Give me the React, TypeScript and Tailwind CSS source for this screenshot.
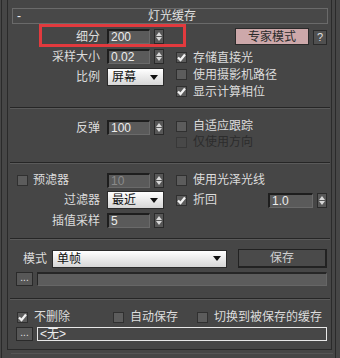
import React from "react";

const FONT = "font-['Liberation_Sans','Noto_Sans_CJK_SC',sans-serif]";

function Spin() {
  return (
    <div className="w-[10px] h-[15px] bg-[#575757] border border-[#2a2a2a] flex flex-col items-center justify-between py-[2px]">
      <svg width="6" height="4" viewBox="0 0 6 4"><path d="M3 0 L6 4 L0 4 Z" fill="#d8d8d8" /></svg>
      <svg width="6" height="4" viewBox="0 0 6 4"><path d="M0 0 L6 0 L3 4 Z" fill="#d8d8d8" /></svg>
    </div>
  );
}

function NumInput({ value, dim = false, w = "w-[43px]" }: { value: string; dim?: boolean; w?: string }) {
  return (
    <div
      className={`${w} h-[15px] bg-[#5a5a5a] border-t-2 border-l-2 border-b border-r border-t-[#1e1e1e] border-l-[#1e1e1e] border-b-[#6a6a6a] border-r-[#6a6a6a] flex items-center pl-[2px] text-[12px] leading-none whitespace-nowrap ${dim ? "text-[#8a8a8a]" : "text-[#ececec]"}`}
    >
      {value}
    </div>
  );
}

function Dropdown({ value, w }: { value: string; w: string }) {
  return (
    <div className={`${w} h-[18px] bg-gradient-to-b from-[#ffffff] to-[#d6d6d6] border border-[#2a2a2a] flex items-center justify-between pl-[4px] pr-[5px] text-[12px] leading-none text-[#111] whitespace-nowrap`}>
      <span>{value}</span>
      <svg width="8" height="5" viewBox="0 0 8 5"><path d="M0 0 L8 0 L4 5 Z" fill="#111" /></svg>
    </div>
  );
}

function Check({ checked = false, disabled = false }: { checked?: boolean; disabled?: boolean }) {
  return (
    <div
      className={`w-[11px] h-[11px] border ${disabled ? "border-[#383838] bg-[#484848]" : "border-[#303030] bg-[#5c5c5c]"} flex items-center justify-center shrink-0`}
    >
      {checked && (
        <svg width="9" height="9" viewBox="0 0 9 9">
          <path d="M1 4.5 L3.5 7 L8 1.5" stroke="#f2f2f2" strokeWidth="2.2" fill="none" />
        </svg>
      )}
    </div>
  );
}

function CheckRow({ label, checked = false, disabled = false, h = "h-[17px]" }: { label: string; checked?: boolean; disabled?: boolean; h?: string }) {
  return (
    <div className={`${h} flex items-center shrink-0`}>
      <Check checked={checked} disabled={disabled} />
      <span className={`ml-[6px] text-[12px] leading-none whitespace-nowrap ${disabled ? "text-[#2c2c2c]" : "text-[#dcdcdc]"}`}>{label}</span>
    </div>
  );
}

function LeftField({ label, children }: { label: string; children: React.ReactNode }) {
  return (
    <div className="flex items-center w-[156px] shrink-0">
      <div className="w-[92px] text-right text-[12px] leading-none text-[#dcdcdc] whitespace-nowrap">{label}</div>
      <div className="ml-[7px] flex items-center">{children}</div>
    </div>
  );
}

function Sep() {
  return <div className="ml-[2px] w-[320px] h-[2px] border-t border-b border-t-[#262626] border-b-[#5a5a5a]" />;
}

function SmallBtn() {
  return (
    <div className="w-[17px] h-[14px] bg-[#575757] border border-[#2a2a2a] flex items-end justify-center pb-[2px] text-[10px] leading-none text-[#e0e0e0]">
      ...
    </div>
  );
}

export default function App() {
  return (
    <div className={`w-[340px] h-[358px] bg-[#464646] overflow-hidden ${FONT}`}>
      <div className="ml-[1px] w-[335px] h-[358px] border-l border-r border-[#2a2a2a] pl-[5px] flex flex-col">
        <div className="relative w-[325px] h-[350px] border-l border-r border-b border-[#2a2a2a] flex flex-col">
          {/* header */}
          <div className="mt-[8px] ml-[4px] w-[316px] h-[16px] border border-[#6a6a6a] bg-[#484848] flex items-center">
            <span className="pl-[4px] w-[12px] text-[12px] leading-none text-[#f0f0f0]">-</span>
            <span className="flex-1 text-center pr-[8px] text-[12px] leading-none text-[#e0e0e0]">灯光缓存</span>
          </div>

          {/* section 1 */}
          <div className="h-[83px] flex">
            <div className="w-[156px] flex flex-col pt-[5px]">
              <div className="h-[15px] flex">
                <LeftField label="细分">
                  <NumInput value="200" />
                  <div className="ml-[4px]"><Spin /></div>
                </LeftField>
              </div>
              <div className="mt-[5px] h-[15px] flex">
                <LeftField label="采样大小">
                  <NumInput value="0.02" />
                  <div className="ml-[4px]"><Spin /></div>
                </LeftField>
              </div>
              <div className="mt-[4px] h-[18px] flex">
                <LeftField label="比例">
                  <Dropdown value="屏幕" w="w-[57px]" />
                </LeftField>
              </div>
            </div>
            <div className="ml-[12px] flex flex-col pt-[4px]">
              <div className="h-[17px] flex items-start">
                <div className="ml-[59px] w-[74px] h-[17px] bg-[#cda8aa] border border-[#2a2a2a] flex items-center justify-center text-[12px] leading-none text-[#2a2a2a]">
                  专家模式
                </div>
                <div className="ml-[4px] mt-[2px] w-[14px] h-[15px] bg-[#505050] border border-[#2a2a2a] flex items-center justify-center text-[11px] leading-none text-[#e0e0e0]">
                  ?
                </div>
              </div>
              <div className="mt-[4px]">
                <CheckRow label="存储直接光" checked />
                <CheckRow label="使用摄影机路径" />
                <CheckRow label="显示计算相位" checked />
              </div>
            </div>
          </div>
          <Sep />

          {/* section 2 */}
          <div className="h-[53px] flex pt-[9px]">
            <div className="h-[15px] mt-[2px] flex">
              <LeftField label="反弹">
                <NumInput value="100" />
                <div className="ml-[4px]"><Spin /></div>
              </LeftField>
            </div>
            <div className="ml-[12px] flex flex-col">
              <CheckRow label="自适应跟踪" h="h-[16px]" />
              <CheckRow label="仅使用方向" disabled h="h-[16px]" />
            </div>
          </div>
          <Sep />

          {/* section 3 */}
          <div className="h-[74px] flex flex-col pt-[8px]">
            <div className="h-[16px] flex items-center">
              <div className="w-[156px] flex items-center shrink-0">
                <div className="w-[99px] pl-[9px] flex items-center">
                  <Check />
                  <span className="ml-[5px] text-[12px] leading-none text-[#dcdcdc] whitespace-nowrap">预滤器</span>
                </div>
                <NumInput value="10" dim />
                <div className="ml-[4px]"><Spin /></div>
              </div>
              <div className="ml-[12px]">
                <CheckRow label="使用光泽光线" h="h-[16px]" />
              </div>
            </div>
            <div className="mt-[3px] h-[18px] flex items-center">
              <LeftField label="过滤器">
                <Dropdown value="最近" w="w-[57px]" />
              </LeftField>
              <div className="ml-[12px] flex items-center">
                <CheckRow label="折回" checked h="h-[18px]" />
                <div className="ml-[51px]">
                  <NumInput value="1.0" w="w-[45px]" />
                </div>
                <div className="ml-[4px]"><Spin /></div>
              </div>
            </div>
            <div className="mt-[4px] h-[15px] flex">
              <LeftField label="插值采样">
                <NumInput value="5" />
                <div className="ml-[4px]"><Spin /></div>
              </LeftField>
            </div>
          </div>
          <Sep />

          {/* section 4 */}
          <div className="h-[58px] flex flex-col pt-[9px]">
            <div className="h-[19px] flex items-center">
              <div className="ml-[15px] w-[29px] text-[12px] leading-none text-[#dcdcdc] whitespace-nowrap">模式</div>
              <Dropdown value="单帧" w="w-[175px]" />
              <div className="ml-[11px] w-[89px] h-[19px] bg-[#4a4a4a] border border-[#222] border-b-2 border-r-2 flex items-center justify-center text-[12px] leading-none text-[#d0d0d0]">
                保存
              </div>
            </div>
            <div className="mt-[4px] h-[14px] flex items-center">
              <div className="ml-[8px]"><SmallBtn /></div>
              <div className="ml-[4px] w-[290px] h-[14px] bg-[#5c5c5c] border-t-2 border-l border-[#262626] border-b border-r border-b-[#666] border-r-[#666]" />
            </div>
          </div>
          <Sep />

          {/* section 5 */}
          <div className="flex flex-col pt-[9px]">
            <div className="h-[16px] flex items-center">
              <div className="ml-[9px] w-[96px]">
                <CheckRow label="不删除" checked h="h-[16px]" />
              </div>
              <div className="w-[84px]">
                <CheckRow label="自动保存" h="h-[16px]" />
              </div>
              <CheckRow label="切换到被保存的缓存" h="h-[16px]" />
            </div>
            <div className="mt-[2px] h-[14px] flex items-center">
              <div className="ml-[8px]"><SmallBtn /></div>
              <div className="ml-[4px] w-[290px] h-[14px] border border-[#e8e8e8] bg-[#474747] flex items-center pl-[2px] text-[12px] leading-none text-[#eeeeee]">
                &lt;无&gt;
              </div>
            </div>
          </div>

          {/* red annotation */}
          <div className="absolute left-[31px] top-[24px] w-[147px] h-[23px] border-[3px] border-[#e23a3e]" />
        </div>
        <div className="mt-[3px] ml-[4px] w-[322px] h-[1px] bg-[#555]" />
      </div>
    </div>
  );
}
